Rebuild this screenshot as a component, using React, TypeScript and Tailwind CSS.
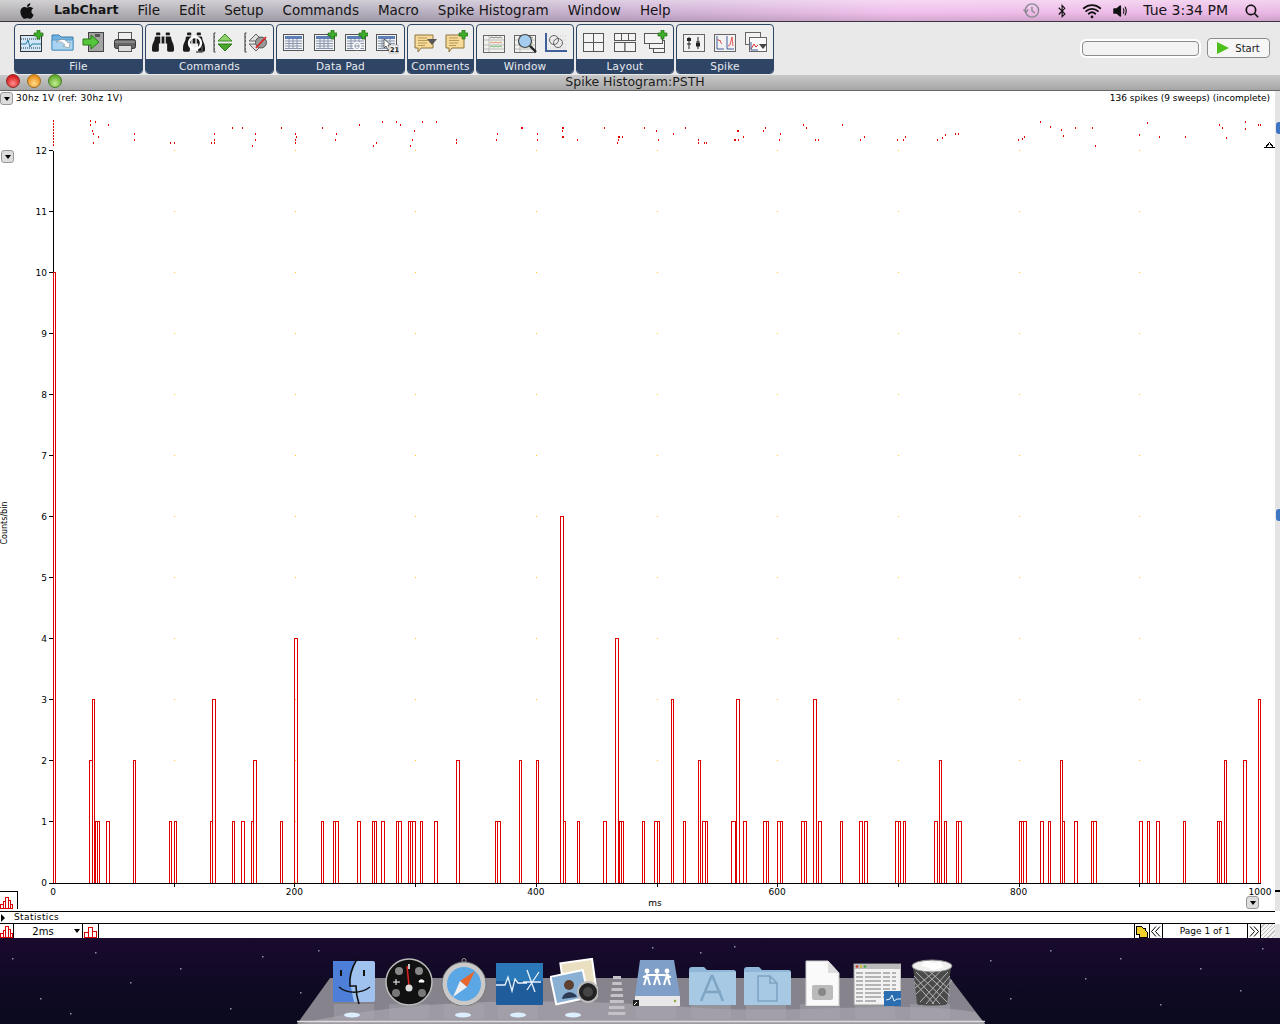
import React from 'react';
import { FaApple, FaBinoculars, FaBluetoothB } from 'react-icons/fa';
import { IoSearch, IoVolumeMedium, IoWifi } from 'react-icons/io5';

const menus = ['File', 'Edit', 'Setup', 'Commands', 'Macro', 'Spike Histogram', 'Window', 'Help'];

// histogram bars, [left px, right px, counts]
const bars: number[][] = [
  [55.5, 53.5, 10], [89.5, 92.5, 2], [92.5, 94.5, 3], [95.5, 97.5, 1], [97.5, 99.5, 1], [106.5, 109.5, 1], [133.5, 135.5, 2],
  [169.5, 171.5, 1], [174.5, 176.5, 1], [210.5, 212.5, 1], [212.5, 215.5, 3], [232.5, 234.5, 1], [241.5, 244.5, 1],
  [251.5, 253.5, 1], [253.5, 256.5, 2], [280.5, 282.5, 1], [294.5, 297.5, 4], [321.5, 323.5, 1], [333.5, 335.5, 1],
  [335.5, 338.5, 1], [357.5, 360.5, 1], [372.5, 374.5, 1], [374.5, 376.5, 1], [381.5, 384.5, 1], [396.5, 398.5, 1],
  [398.5, 401.5, 1], [408.5, 410.5, 1], [410.5, 412.5, 1], [412.5, 415.5, 1], [420.5, 422.5, 1], [434.5, 437.5, 1],
  [456.5, 459.5, 2], [495.5, 497.5, 1], [497.5, 500.5, 1], [519.5, 521.5, 2], [536.5, 538.5, 2], [560.5, 563.5, 6],
  [563.5, 565.5, 1], [577.5, 579.5, 1], [603.5, 606.5, 1], [615.5, 618.5, 4], [619.5, 621.5, 1], [621.5, 623.5, 1],
  [642.5, 644.5, 1], [654.5, 657.5, 1], [657.5, 659.5, 1], [671.5, 673.5, 3], [683.5, 685.5, 1], [698.5, 700.5, 2],
  [702.5, 705.5, 1], [705.5, 707.5, 1], [731.5, 735.5, 1], [736.5, 739.5, 3], [743.5, 746.5, 1], [763.5, 766.5, 1],
  [766.5, 768.5, 1], [777.5, 780.5, 1], [780.5, 782.5, 1], [801.5, 804.5, 1], [804.5, 806.5, 1], [813.5, 816.5, 3],
  [818.5, 821.5, 1], [840.5, 842.5, 1], [859.5, 862.5, 1], [864.5, 867.5, 1], [895.5, 898.5, 1], [898.5, 900.5, 1],
  [903.5, 905.5, 1], [934.5, 937.5, 1], [939.5, 941.5, 2], [944.5, 946.5, 1], [956.5, 958.5, 1], [958.5, 961.5, 1],
  [1019.5, 1021.5, 1], [1021.5, 1023.5, 1], [1023.5, 1026.5, 1], [1040.5, 1043.5, 1], [1048.5, 1050.5, 1],
  [1060.5, 1062.5, 2], [1062.5, 1064.5, 1], [1074.5, 1077.5, 1], [1091.5, 1093.5, 1], [1093.5, 1096.5, 1],
  [1139.5, 1142.5, 1], [1147.5, 1149.5, 1], [1156.5, 1159.5, 1], [1183.5, 1185.5, 1], [1217.5, 1219.5, 1],
  [1219.5, 1221.5, 1], [1224.5, 1226.5, 2], [1243.5, 1246.5, 2], [1258.5, 1260.5, 3],
];

// raster dots [x, y]
const dots: number[][] = [
  [90, 120], [90, 124], [95, 121], [108, 124], [92, 130], [93, 133], [98, 136], [93, 142], [134, 133], [134, 139],
  [170, 142], [174, 142], [214, 133], [214, 139], [211, 142], [214, 142], [232, 127], [242, 127], [255, 133], [255, 139],
  [252, 145], [281, 127], [295, 133], [296, 136], [295, 139], [295, 142], [322, 127], [336, 133], [335, 139], [359, 124],
  [382, 121], [396, 121], [400, 124], [414, 130], [412, 139], [410, 145], [376, 142], [373, 145], [422, 121], [436, 121],
  [456, 139], [456, 142], [497, 133], [496, 139], [521, 127], [522, 127], [537, 133], [537, 139], [562, 127], [563, 127],
  [562, 130], [562, 136], [563, 136], [577, 139], [604, 127], [618, 136], [619, 136], [622, 136], [618, 139], [617, 142],
  [644, 127], [656, 130], [658, 139], [673, 133], [685, 127], [698, 139], [698, 142], [704, 142], [706, 142], [737, 130],
  [738, 130], [738, 139], [734, 139], [735, 139], [743, 136], [763, 130], [765, 127], [780, 133], [779, 139], [803, 124],
  [806, 127], [815, 139], [818, 139], [842, 124], [860, 139], [864, 136], [897, 139], [903, 139], [905, 136], [937, 139],
  [942, 137], [945, 134], [955, 133], [958, 133], [1018, 139], [1022, 138], [1024, 136], [1040, 121], [1050, 126],
  [1061, 129], [1063, 135], [1075, 127], [1092, 127], [1095, 145], [1139, 134], [1147, 122], [1159, 136], [1185, 136],
  [1219, 124], [1222, 127], [1226, 137], [1245, 121], [1245, 128], [1258, 124], [1260, 124],
];

const yTicks = [0, 1, 2, 3, 4, 5, 6, 7, 8, 9, 10, 11, 12];
const xLabels = [0, 200, 400, 600, 800, 1000];
const xGuides = [174, 295, 415, 536, 657, 777, 898, 1019, 1139];

const stars = [
  [12, 20], [40, 60], [95, 14], [130, 44], [180, 30], [230, 70], [262, 18], [300, 54], [318, 12], [652, 9], [700, 14],
  [734, 8], [990, 22], [1010, 60], [1050, 12], [1085, 40], [1120, 20], [1160, 66], [1200, 30], [1240, 52], [1262, 10], [70, 75],
];

function Plus({ x = 16, y = 0 }: { x?: number; y?: number }) {
  return (
    <path
      transform={`translate(${x} ${y})`}
      d="M3 0h3v3h3v3H6v3H3V6H0V3h3z"
      fill="#3fae2a"
      stroke="#1c6b12"
      strokeWidth="0.7"
    />
  );
}

function TableBase() {
  return (
    <g>
      <rect x="1.5" y="4.5" width="20" height="16" fill="#f2f3f5" stroke="#555" />
      <rect x="3" y="6" width="17" height="3" fill="#5d7fb5" />
      <path d="M3 11h17M3 13.5h17M3 16h17M3 18.5h17M7 9v10M11 9v10M15 9v10" stroke="#8a97ad" strokeWidth="1" />
    </g>
  );
}

function DiamondRange({ off }: { off?: boolean }) {
  return (
    <g>
      <path d="M2.5 3H1v19h1.5M1 7h1M1 11h1M1 15h1M1 19h1" stroke="#333" fill="none" />
      <path d="M5 11l7-7 7 7z" fill={off ? '#ddd' : '#8fd06a'} stroke={off ? '#666' : '#3a8a22'} />
      <path d="M5 14l7 7 7-7z" fill={off ? '#ddd' : '#4aa52e'} stroke={off ? '#666' : '#2b7a18'} />
      {off && <circle cx="17" cy="12.5" r="5.5" fill="#999" stroke="#555" />}
      {off && <path d="M12 18L22 7" stroke="#d22" strokeWidth="1.8" />}
    </g>
  );
}

function Note() {
  return (
    <g>
      <path d="M2 5h18v13H8l-3 4v-4H2z" fill="#f8da98" stroke="#8c7440" />
      <path d="M5 8h9M5 10.5h10M5 13h9M5 15.5h7" stroke="#a58a4e" strokeWidth="0.8" />
    </g>
  );
}

function WindowBase() {
  return (
    <g>
      <rect x="1.5" y="5.5" width="21" height="17" fill="#f1f1ee" stroke="#666" />
      <path d="M2 10h20M2 15h20M2 19h20M7 6v16" stroke="#bbb" />
      <path d="M8 8l2-1 2 1 2-1 2 1 2-1 2 1" stroke="#555" fill="none" strokeWidth="0.7" />
      <path d="M8 13l2-1 2 1 2-1 2 1 2-1 2 1" stroke="#d9722a" fill="none" strokeWidth="0.7" />
      <path d="M8 17l2-1 2 1 2-1 2 1 2-1 2 1" stroke="#41a641" fill="none" strokeWidth="0.7" />
    </g>
  );
}

function ToolIcon({ name }: { name: string }) {
  if (name === 'bino' || name === 'binoRefresh') {
    return (
      <div className="relative flex h-6 w-6 items-center justify-center">
        <FaBinoculars className="h-[22px] w-[22px] text-[#1b1b1b]" />
        {name === 'binoRefresh' && (
          <svg viewBox="0 0 24 24" className="absolute left-0 top-0 h-6 w-6">
            <circle cx="13" cy="13" r="6" fill="none" stroke="#fff" strokeWidth="2.4" />
            <path d="M14 22h6v-6" fill="none" stroke="#555" strokeWidth="1.4" />
          </svg>
        )}
      </div>
    );
  }
  let body: React.ReactNode = null;
  switch (name) {
    case 'chart':
      body = (
        <g>
          <rect x="0.5" y="5.5" width="21" height="16" fill="#cfe7f8" stroke="#333" />
          <path d="M1 9h20M1 18h20" stroke="#333" strokeDasharray="1 1" />
          <path d="M1 14h5l2-4 2 7 2-3h9" fill="none" stroke="#2a7a9c" />
          <Plus x={14} y={0} />
        </g>
      );
      break;
    case 'open':
      body = (
        <g>
          <path d="M1 5h7l2 2h12v13H1z" fill="#6fb2e2" stroke="#3d7cab" />
          <path d="M1 10h21v10H1z" fill="#a9d4f1" stroke="#5b9ac8" />
          <path d="M5 12c5-4 10-3 12 1l2-1-1 6-6-2 2-1c-2-3-6-4-9-3z" fill="#fff" stroke="#777" strokeWidth="0.5" />
        </g>
      );
      break;
    case 'import':
      body = (
        <g>
          <rect x="6.5" y="2.5" width="15" height="19" fill="#a4a4a4" stroke="#444" />
          <rect x="13" y="4" width="5" height="3" fill="#555" />
          <path d="M1 9h8V5l8 7-8 7v-4H1z" fill="#53c63a" stroke="#2a7a18" />
        </g>
      );
      break;
    case 'print':
      body = (
        <g>
          <rect x="5.5" y="2.5" width="13" height="7" fill="#eee" stroke="#555" />
          <rect x="1.5" y="9.5" width="21" height="9" rx="2" fill="#666" stroke="#333" />
          <path d="M2 12h20" stroke="#aaa" />
          <rect x="5.5" y="15.5" width="13" height="6" fill="#ddd" stroke="#555" />
        </g>
      );
      break;
    case 'range':
      body = <DiamondRange />;
      break;
    case 'rangeOff':
      body = <DiamondRange off />;
      break;
    case 'table':
      body = <TableBase />;
      break;
    case 'tablePlus':
      body = (
        <g>
          <TableBase />
          <Plus x={15} y={0} />
        </g>
      );
      break;
    case 'tableRefresh':
      body = (
        <g>
          <TableBase />
          <circle cx="13" cy="16" r="3.5" fill="none" stroke="#fff" strokeWidth="1.6" />
          <Plus x={15} y={0} />
        </g>
      );
      break;
    case 'table21':
      body = (
        <g>
          <TableBase />
          <path d="M9 9l7 6-3 0 2 4-2 1-2-4-2 2z" fill="#fff" stroke="#222" strokeWidth="0.7" />
          <rect x="14" y="15" width="9" height="8" fill="#f5f5f5" stroke="#888" strokeWidth="0.5" />
          <text x="15" y="22" fontSize="6.5" fontWeight="bold" fill="#111">21</text>
        </g>
      );
      break;
    case 'noteMenu':
      body = (
        <g>
          <Note />
          <path d="M14 9h10l-5 6z" fill="#555" />
        </g>
      );
      break;
    case 'notePlus':
      body = (
        <g>
          <Note />
          <Plus x={15} y={0} />
        </g>
      );
      break;
    case 'win':
      body = <WindowBase />;
      break;
    case 'winZoom':
      body = (
        <g>
          <WindowBase />
          <circle cx="12" cy="11" r="6.5" fill="#a5cdf0" stroke="#444" strokeWidth="1.2" />
          <path d="M17 16l6 6" stroke="#222" strokeWidth="2.4" />
        </g>
      );
      break;
    case 'winDots':
      body = (
        <g>
          <path d="M2 3v18h21" fill="none" stroke="#3f5f9a" strokeWidth="2" />
          <path d="M4 6h18M4 10h18M4 14h18M4 18h18" stroke="#ccc" strokeDasharray="1 1.4" />
          <circle cx="10" cy="10" r="4.5" fill="none" stroke="#666" />
          <circle cx="14" cy="13" r="4.5" fill="none" stroke="#666" />
        </g>
      );
      break;
    case 'four':
      body = (
        <g fill="#f3f3f3" stroke="#555">
          <rect x="1.5" y="3.5" width="10" height="9" />
          <rect x="11.5" y="3.5" width="10" height="9" />
          <rect x="1.5" y="12.5" width="10" height="9" />
          <rect x="11.5" y="12.5" width="10" height="9" />
        </g>
      );
      break;
    case 'five':
      body = (
        <g fill="#f3f3f3" stroke="#555">
          <rect x="1.5" y="3.5" width="7" height="7" />
          <rect x="8.5" y="3.5" width="7" height="7" />
          <rect x="15.5" y="3.5" width="7" height="7" />
          <rect x="1.5" y="12.5" width="10.5" height="9" />
          <rect x="12" y="12.5" width="10.5" height="9" />
        </g>
      );
      break;
    case 'stack':
      body = (
        <g fill="#f3f3f3" stroke="#555">
          <rect x="9.5" y="13.5" width="11" height="9" />
          <rect x="5.5" y="10.5" width="15" height="8" />
          <rect x="0.5" y="3.5" width="18" height="10" />
          <Plus x={14} y={0} />
        </g>
      );
      break;
    case 'sliders':
      body = (
        <g>
          <rect x="1.5" y="4.5" width="21" height="17" fill="#f2f2f2" stroke="#666" />
          <path d="M7 7v12M16 7v12M5 10h4M5 14h4M14 12h4M14 16h4" stroke="#222" />
          <rect x="5" y="8" width="4" height="3" fill="#222" />
          <rect x="14" y="13" width="4" height="3" fill="#222" />
        </g>
      );
      break;
    case 'charts':
      body = (
        <g>
          <rect x="1.5" y="4.5" width="21" height="17" fill="#f2f2f2" stroke="#666" />
          <path d="M4 6v13h7M14 6v13h7" fill="none" stroke="#3f5f9a" />
          <path d="M5 9l1 2 1-1 1 3 1 1M15 16l2-1 2-8 1 9" fill="none" stroke="#d33" strokeWidth="0.8" />
        </g>
      );
      break;
    case 'stackMenu':
      body = (
        <g>
          <rect x="1.5" y="2.5" width="15" height="12" fill="#f2f2f2" stroke="#666" />
          <rect x="5.5" y="7.5" width="17" height="14" fill="#fafafa" stroke="#666" />
          <path d="M7 19l3-5 2 3 2-2" fill="none" stroke="#d33" />
          <path d="M7 12v8h7" fill="none" stroke="#3f5f9a" />
          <path d="M15 14h8l-4 5z" fill="#444" />
        </g>
      );
      break;
  }
  return (
    <svg viewBox="0 0 24 24" className="h-6 w-6">
      {body}
    </svg>
  );
}

function ToolGroup({ label, icons, width }: { label: string; icons: string[]; width: string }) {
  return (
    <div className={`flex h-[50px] flex-col overflow-hidden rounded-[4px] border border-[#2f4566] bg-[#eeeeee] ${width}`}>
      <div className="flex h-[35px] items-center justify-center">
        {icons.map((icon) => (
          <div key={icon} className="flex w-[31px] justify-center">
            <ToolIcon name={icon} />
          </div>
        ))}
      </div>
      <div className="flex h-[14px] items-center justify-center bg-[#2f4566] pt-[1px] text-[10.5px] tracking-[0.2px] text-[#e8ebf0]">
        {label}
      </div>
    </div>
  );
}

function DropButton({ className }: { className: string }) {
  return (
    <div className={`absolute flex h-[13px] w-[13px] items-center justify-center rounded-[3px] border border-[#999] bg-[#dddddd] ${className}`}>
      <div className="h-0 w-0 border-x-[3.5px] border-t-[4px] border-x-transparent border-t-black" />
    </div>
  );
}

function HistIcon({ wide }: { wide?: boolean }) {
  return (
    <svg viewBox="0 0 13 13" className="h-[13px] w-[13px] shrink-0" shapeRendering="crispEdges">
      <path
        d={wide ? 'M0.5 12.5V7.5H4.5V2.5H8.500V6.5H12.5V12.5H0.5M4.5 7.5V12.5M8.5 6.5V12.5' : 'M0.5 12.5V8.5H3.5V5.5H5.5V1.5H8.5V4.5H10.5V8.5H12.5V12.5H0.5M3.5 8.5V12.5M5.5 5.5V12.5M8.5 4.5V12.5M10.5 8.5V12.5'}
        fill="none"
        stroke="#dd0000"
      />
    </svg>
  );
}

function Chart() {
  return (
    <svg viewBox="0 105 1275 806" className="h-[806px] w-[1275px] bg-white" shapeRendering="crispEdges">
      {yTicks.map((t) =>
        xGuides.map((x) => <rect key={`${t}-${x}`} x={x} y={882 - t * 61} width="1" height="1" fill="#ffc81e" />),
      )}
      {dots.map(([x, y], i) => (
        <rect key={i} x={x} y={y} width="1" height="2" fill="#e00000" />
      ))}
      <path d="M53.5 120V146" stroke="#e00000" strokeDasharray="2 1" />
      <path d="M53.5 151V883" stroke="#000" />
      <path d="M53 883.5H1261" stroke="#000" />
      {bars.map(([a, b, h]) => (
        <path key={`${a}-${b}`} d={`M${a} 883V${882.5 - h * 61}H${b}V883`} fill="none" stroke="#e00000" />
      ))}
      {yTicks.map((t) => (
        <g key={t}>
          <path d={`M49 ${t === 0 ? 883.5 : 882.5 - t * 61}H53`} stroke="#000" />
          <text x="47" y={886 - t * 61} textAnchor="end" fontSize="9" fill="#000">
            {t}
          </text>
        </g>
      ))}
      {[174.5, 294.5, 415.5, 536.5, 657.5, 777.5, 898.5, 1019.5, 1139.5].map((x) => (
        <path key={x} d={`M${x} 884V887`} stroke="#000" />
      ))}
      {xLabels.map((v, i) => (
        <text key={v} x={53 + i * 241.4} y="895" textAnchor="middle" fontSize="9" fill="#000">
          {v}
        </text>
      ))}
      <text x="655" y="906" textAnchor="middle" fontSize="9" fill="#000">ms</text>
      <text transform="translate(7 523) rotate(-90)" textAnchor="middle" fontSize="8" fill="#000">Counts/bin</text>
      <path d="M1265.5 147.5L1269.5 142.5L1273.5 147.5" fill="none" stroke="#000" />
      <path d="M1264 147.5H1275" stroke="#000" />
    </svg>
  );
}

function DockIcon({ name }: { name: string }) {
  let body: React.ReactNode = null;
  switch (name) {
    case 'finder':
      body = (
        <g>
          <rect x="3" y="3" width="42" height="41" rx="2" fill="#9fc2ee" />
          <path d="M3 3h22c-4 8-5 16-4 26 1 6 2 10 3 15H3z" fill="#4e7fd8" />
          <path d="M27 1c-6 10-8 18-7 27h6c0 6 1 12 3 18" fill="none" stroke="#111" strokeWidth="1.6" />
          <path d="M11 12v6M34 12v6" stroke="#111" strokeWidth="2" />
          <path d="M9 29c8 7 22 7 31 0" fill="none" stroke="#111" strokeWidth="1.4" />
        </g>
      );
      break;
    case 'dash':
      body = (
        <g>
          <circle cx="24" cy="24" r="23" fill="#111" stroke="#bbb" strokeWidth="1.5" />
          <circle cx="14" cy="13" r="4" fill="#888" />
          <circle cx="34" cy="13" r="4" fill="#888" />
          <circle cx="11" cy="35" r="4" fill="#777" />
          <circle cx="37" cy="35" r="4" fill="#777" />
          <path d="M22 8l2 20" stroke="#d22" strokeWidth="1.5" />
          <circle cx="24" cy="30" r="3.5" fill="#ddd" />
          <path d="M8 24h7M11 21v6M34 24c0-3 5-3 5 0z" stroke="#fff" fill="#fff" />
          <path d="M24 6v5" stroke="#fff" strokeWidth="1.5" />
        </g>
      );
      break;
    case 'safari':
      body = (
        <g>
          <circle cx="24" cy="2.5" r="2" fill="none" stroke="#999" />
          <circle cx="24" cy="26" r="22" fill="#c9c9c9" stroke="#777" />
          <circle cx="24" cy="26" r="17" fill="#5ba7e6" />
          <path d="M35 13L27 29 20 23z" fill="#e8662a" />
          <path d="M13 39l7-16 7 6z" fill="#eee" />
        </g>
      );
      break;
    case 'labchart':
      body = (
        <g>
          <rect x="1" y="5" width="47" height="42" rx="1" fill="#1f5c9c" />
          <rect x="1" y="5" width="47" height="18" fill="#2a78b8" />
          <path d="M1 27h9l3-8 4 14 3-12 3 4h9M32 12l8 22M44 14L32 32M28 24h18" fill="none" stroke="#e8f2fb" strokeWidth="1.3" />
        </g>
      );
      break;
    case 'iphoto':
      body = (
        <g>
          <rect x="12" y="3" width="32" height="26" fill="#eadfc0" stroke="#fff" strokeWidth="2" transform="rotate(-8 28 16)" />
          <rect x="3" y="15" width="33" height="28" fill="#8ab0d4" stroke="#fff" strokeWidth="2" transform="rotate(-12 20 29)" />
          <circle cx="19" cy="27" r="5" fill="#5d4030" />
          <path d="M12 41c1-8 12-9 15-2z" fill="#2d3c55" />
          <circle cx="38" cy="34" r="10" fill="#222" stroke="#bbb" strokeWidth="2" />
          <circle cx="38" cy="34" r="5" fill="#444" />
        </g>
      );
      break;
    case 'drive':
      body = (
        <g>
          <path d="M7 2h34l6 36H2z" fill="#7f9fc8" />
          <path d="M2 38h45v10H2z" fill="#e8e8e8" />
          <path d="M11 27l3-10 3 10M14 17h2M21 27l3-10 3 10M24 17h2M31 27l3-10 3 10M34 17h2M10 19l7-2 7 0 7 0 7 2" fill="none" stroke="#fff" strokeWidth="2" />
          <circle cx="14" cy="13" r="2.4" fill="#fff" />
          <circle cx="24" cy="13" r="2.4" fill="#fff" />
          <circle cx="34" cy="13" r="2.4" fill="#fff" />
          <circle cx="42" cy="43" r="1.2" fill="#8a3" />
          <rect x="0" y="42" width="6" height="6" fill="#222" />
          <path d="M1 47l3-3" stroke="#fff" />
        </g>
      );
      break;
    case 'apps':
    case 'docs':
      body = (
        <g>
          <path d="M1 12c0-2 1-3 3-3h12l3 3h27c1 0 2 1 2 2v32H1z" fill="#8fb6d6" />
          <rect x="1" y="14" width="47" height="33" fill="#a7c9e3" />
          {name === 'apps' ? (
            <path d="M24 17l-11 26M24 17l11 26M16 34h17" fill="none" stroke="#7ea4c4" strokeWidth="2.4" />
          ) : (
            <path d="M15 18h12l7 7v18H15zM27 18v7h7" fill="none" stroke="#7ea4c4" strokeWidth="1.6" />
          )}
        </g>
      );
      break;
    case 'file':
      body = (
        <g>
          <path d="M8 3h22l11 12v33H8z" fill="#fafafa" stroke="#ccc" />
          <path d="M30 3v12h11z" fill="#ddd" />
          <rect x="14" y="27" width="21" height="15" rx="2" fill="#bbb" />
          <circle cx="24" cy="34" r="4" fill="#888" />
        </g>
      );
      break;
    case 'window':
      body = (
        <g>
          <rect x="1" y="6" width="47" height="41" fill="#f2f2f2" stroke="#999" />
          <rect x="1" y="6" width="47" height="5" fill="#bbb" />
          <circle cx="4" cy="8.5" r="1.3" fill="#c33" />
          <circle cx="8" cy="8.5" r="1.3" fill="#db3" />
          <circle cx="12" cy="8.5" r="1.3" fill="#4a4" />
          <path d="M3 15h40M3 19h40M3 23h40M3 27h40M3 31h40M3 35h34M3 39h30M3 43h20" stroke="#777" strokeWidth="1.2" strokeDasharray="7 2 16 2" />
          <rect x="31" y="33" width="18" height="15" fill="#2a6db0" />
          <path d="M33 42l4-1 2-4 2 6 3-2h4" fill="none" stroke="#e8f2fb" />
        </g>
      );
      break;
    case 'trash':
      body = (
        <g>
          <path d="M5 8l4 38c0 2 30 2 30 0l4-38z" fill="#4a4a4a" />
          <path d="M8 14l31 30M14 12l28 26M6 24l20 22M40 14L12 44M34 12L8 36M44 22L24 46M6 18l26 28M20 12l22 20M42 18L18 46M28 12L7 30" stroke="#b5b5b5" strokeWidth="1" />
          <ellipse cx="24" cy="8" rx="20" ry="6" fill="#efefef" stroke="#888" />
          <path d="M13 7l6-4 7 2 6-1 4 5-10 3z" fill="#fff" />
        </g>
      );
      break;
  }
  return (
    <svg viewBox="0 0 48 48" className="h-12 w-12 shrink-0">
      {body}
    </svg>
  );
}

function Dock() {
  return (
    <div className="relative h-[86px] overflow-hidden bg-[linear-gradient(to_bottom,#1a0a2e,#0e0a22_65%,#0a0a1e)]">
      <svg viewBox="0 0 1280 86" className="absolute left-0 top-0 h-[86px] w-[1280px]">
        {stars.map(([x, y]) => (
          <rect key={`${x}-${y}`} x={x} y={y} width="1.5" height="1.5" fill="#8f8fa8" />
        ))}
        <path d="M330 40H950L985 86H297z" fill="#86838c" />
        <path d="M298 86C420 58 560 60 700 70 800 76 900 62 975 74L985 86z" fill="#9e9aa3" />
        <path d="M297 83.500H985" stroke="#dcdcdc" strokeWidth="1.5" />
        {[354, 409, 464, 518, 656, 711, 766, 820, 875, 930].map((x) => (
          <rect key={x} x={x - 20} y="66" width="40" height="15" fill="#a9a7b0" opacity="0.45" />
        ))}
        {[352, 463, 518, 573].map((x) => (
          <ellipse key={x} cx={x} cy="77" rx="8" ry="2.6" fill="#dcefff" />
        ))}
        {[0, 1, 2, 3, 4, 5, 6].map((i) => (
          <rect key={i} x={613 - i * 0.8} y={38 + i * 6} width={8 + i * 1.5} height="3" fill="#c4c2c8" />
        ))}
      </svg>
      <div className="relative flex pl-[330px] pt-[20px]">
        <div className="flex gap-[7px]">
          {['finder', 'dash', 'safari', 'labchart', 'iphoto'].map((n) => (
            <DockIcon key={n} name={n} />
          ))}
        </div>
        <div className="ml-[35px] flex gap-[7px]">
          {['drive', 'apps', 'docs', 'file', 'window', 'trash'].map((n) => (
            <DockIcon key={n} name={n} />
          ))}
        </div>
      </div>
    </div>
  );
}

export default function App() {
  return (
    <div className="flex h-[1024px] w-[1280px] flex-col overflow-hidden bg-white font-['DejaVu_Sans',sans-serif] text-black">
      {/* Menu bar */}
      <div className="flex h-[22px] items-center border-b border-[#3a3340] bg-[linear-gradient(to_bottom,rgba(255,255,255,0.4),rgba(255,255,255,0)_60%,rgba(0,0,0,0.12)),linear-gradient(to_right,#b5b3b5,#b3aebc_30%,#d3b2d8_55%,#f0bfeb_70%,#eab7e4)] text-[13.5px] text-[#151515]">
        <FaApple className="ml-[18px] h-[18px] w-[18px] text-[#111]" />
        <span className="ml-[18px] text-[12.6px] font-bold">LabChart</span>
        <div className="ml-[19px] flex gap-[19px]">
          {menus.map((m) => (
            <span key={m}>{m}</span>
          ))}
        </div>
        <div className="ml-auto flex items-center">
          <svg viewBox="0 0 18 18" className="h-[17px] w-[17px] text-[#8a8a92]">
            <circle cx="9.5" cy="9" r="7" fill="none" stroke="currentColor" strokeWidth="1.5" />
            <path d="M9.5 5v4.5l3 2M0.5 8l2.5 3 2.500-3" fill="none" stroke="currentColor" strokeWidth="1.5" />
          </svg>
          <FaBluetoothB className="ml-[16px] h-[14px] w-[12px] text-[#111]" />
          <IoWifi className="ml-[13px] h-[22px] w-[22px] text-[#111]" />
          <IoVolumeMedium className="ml-[8px] h-[18px] w-[18px] text-[#111]" />
          <span className="ml-[14px] text-[14px]">Tue 3:34 PM</span>
          <IoSearch className="ml-[16px] mr-[20px] h-[16px] w-[16px] stroke-2 text-[#111]" />
        </div>
      </div>

      {/* Toolbar */}
      <div className="flex h-[53px] items-start bg-[#e9e9e9] pl-[14px] pt-[2px]">
        <div className="flex gap-[2px]">
          <ToolGroup label="File" width="w-[129px]" icons={['chart', 'open', 'import', 'print']} />
          <ToolGroup label="Commands" width="w-[129px]" icons={['bino', 'binoRefresh', 'range', 'rangeOff']} />
          <ToolGroup label="Data Pad" width="w-[129px]" icons={['table', 'tablePlus', 'tableRefresh', 'table21']} />
          <ToolGroup label="Comments" width="w-[67px]" icons={['noteMenu', 'notePlus']} />
          <ToolGroup label="Window" width="w-[98px]" icons={['win', 'winZoom', 'winDots']} />
          <ToolGroup label="Layout" width="w-[98px]" icons={['four', 'five', 'stack']} />
          <ToolGroup label="Spike" width="w-[98px]" icons={['sliders', 'charts', 'stackMenu']} />
        </div>
        <div className="ml-auto mr-[10px] mt-[14px] flex items-center">
          <div className="h-[15px] w-[117px] rounded-[4px] border border-[#8c8c8c] bg-[#f3f3f3] shadow-[0_0_0_2px_#ffffff]" />
          <div className="ml-[8px] flex h-[20px] w-[63px] items-center justify-center gap-[6px] rounded-[4px] border border-[#8c8c8c] bg-[#f6f6f6] text-[10px] text-[#222]">
            <div className="h-0 w-0 border-y-[6px] border-l-[12px] border-y-transparent border-l-[#4fbf1c]" />
            <span>Start</span>
          </div>
        </div>
      </div>

      {/* Title bar */}
      <div className="relative flex h-[16px] items-center justify-center border-b border-[#666] bg-[linear-gradient(to_bottom,#c9c9c9,#a6a6a6)] text-[12.5px] text-[#1c1c1c]">
        <div className="absolute left-[6px] top-[-1px] flex gap-[7px]">
          <div className="h-[14px] w-[14px] rounded-full border border-[#8a2a2a] bg-[radial-gradient(circle_at_50%_70%,#ff8f8f,#d91c1c_70%)]" />
          <div className="h-[14px] w-[14px] rounded-full border border-[#a06a1a] bg-[radial-gradient(circle_at_50%_70%,#ffdc8c,#e88f1c_70%)]" />
          <div className="h-[14px] w-[14px] rounded-full border border-[#4a7a2a] bg-[radial-gradient(circle_at_50%_70%,#c4ee92,#64ab30_70%)]" />
        </div>
        <span className="pr-[10px]">Spike Histogram:PSTH</span>
      </div>

      {/* Plot window */}
      <div className="relative flex h-[820px] bg-white">
        <div className="w-[1275px]">
          <div className="flex h-[14px] items-center justify-between pl-[16px] pr-[5px] pt-[2px] text-[9px]">
            <span className="tracking-[0.27px]">30hz 1V (ref: 30hz 1V)</span>
            <span>136 spikes (9 sweeps) (incomplete)</span>
          </div>
          <Chart />
        </div>
        <div className="w-[5px] bg-[#e4e4e4]" />
        <div className="absolute left-[1276px] top-[31px] h-[12px] w-[4px] rounded-l-[3px] bg-[#3f76c4]" />
        <div className="absolute left-[1276px] top-[418px] h-[12px] w-[4px] rounded-l-[3px] bg-[#3f76c4]" />
        <div className="absolute left-[1275px] top-[799px] h-[2px] w-[5px] bg-black" />
        <DropButton className="left-0 top-[1px]" />
        <DropButton className="left-[1px] top-[59px]" />
        <DropButton className="left-[1246px] top-[805px]" />
        <div className="absolute bottom-[2px] left-0 flex h-[18px] w-[18px] items-end border-r border-t border-black">
          <HistIcon />
        </div>
      </div>

      {/* Statistics */}
      <div className="flex h-[13px] w-[1275px] items-center border-y border-black bg-white text-[9px]">
        <div className="ml-[1px] h-0 w-0 border-y-[4px] border-l-[4px] border-y-transparent border-l-black" />
        <span className="ml-[9px] tracking-[0.4px]">Statistics</span>
      </div>

      {/* Status */}
      <div className="flex h-[14px] bg-white text-[9px]">
        <div className="flex w-[1275px] items-center">
          <div className="flex h-full w-[14px] items-center border-r border-black">
            <HistIcon />
          </div>
          <div className="relative flex h-full w-[69px] items-center justify-center border-r border-black pr-[10px] pt-[1px] text-[10px]">
            2ms
            <div className="absolute right-[2px] top-[5px] h-0 w-0 border-x-[3.5px] border-t-[4px] border-x-transparent border-t-black" />
          </div>
          <div className="flex h-full w-[16px] items-center justify-center border-r border-black">
            <HistIcon wide />
          </div>
          <div className="ml-auto flex h-full">
            <div className="flex w-[16px] items-center justify-center border-x border-black">
              <svg viewBox="0 0 12 13" className="h-[13px] w-[12px]" shapeRendering="crispEdges">
                <path d="M0.500 1.500H5.500L7.500 3.500H9.500V5.500L11.500 7.500V12.500H3.500V9.500H0.500Z" fill="#f2cf2a" stroke="#000" />
              </svg>
            </div>
            <div className="flex w-[13px] items-center justify-center border-r border-black">
              <svg viewBox="0 0 10 11" className="h-[11px] w-[10px]">
                <path d="M5 0.500L0.500 5.500L5 10.500M9 0.500L4.500 5.500L9 10.500" fill="none" stroke="#000" />
              </svg>
            </div>
            <div className="flex w-[85px] items-center justify-center border-r border-black pt-[1px]">Page 1 of 1</div>
            <div className="flex w-[12px] items-center justify-center">
              <svg viewBox="0 0 10 11" className="h-[11px] w-[10px]">
                <path d="M1 0.500L5.500 5.500L1 10.500M5 0.500L9.500 5.500L5 10.500" fill="none" stroke="#000" />
              </svg>
            </div>
            <div className="w-[15px] border-l border-black bg-[repeating-linear-gradient(135deg,#f4f4f4_0,#f4f4f4_2px,#bdbdbd_2px,#bdbdbd_3px)]" />
          </div>
        </div>
        <div className="w-[5px] bg-[#e4e4e4]" />
      </div>

      <Dock />
    </div>
  );
}
